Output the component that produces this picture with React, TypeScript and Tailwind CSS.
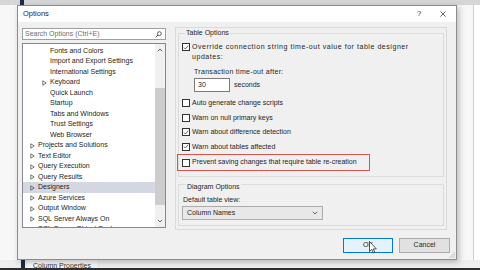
import React from 'react'

const FONT = "font-['Liberation_Sans',Arial,sans-serif]"

type Node = { t: string; l: 1 | 2; arrow?: boolean; sel?: boolean }

const TREE: Node[] = [
    { t: 'Fonts and Colors', l: 2 },
    { t: 'Import and Export Settings', l: 2 },
    { t: 'International Settings', l: 2 },
    { t: 'Keyboard', l: 2, arrow: true },
    { t: 'Quick Launch', l: 2 },
    { t: 'Startup', l: 2 },
    { t: 'Tabs and Windows', l: 2 },
    { t: 'Trust Settings', l: 2 },
    { t: 'Web Browser', l: 2 },
    { t: 'Projects and Solutions', l: 1, arrow: true },
    { t: 'Text Editor', l: 1, arrow: true },
    { t: 'Query Execution', l: 1, arrow: true },
    { t: 'Query Results', l: 1, arrow: true },
    { t: 'Designers', l: 1, arrow: true, sel: true },
    { t: 'Azure Services', l: 1, arrow: true },
    { t: 'Output Window', l: 1, arrow: true },
    { t: 'SQL Server Always On', l: 1, arrow: true },
    { t: 'SQL Server Object Explorer', l: 1, arrow: true },
]

function Triangle() {
    return (
        <svg viewBox="0 0 5 6" className="h-[6px] w-[5px]">
            <path d="M0.8 0.8 L4.2 3 L0.8 5.2 Z" fill="none" stroke="#555" strokeWidth="0.8" />
        </svg>
    )
}

function Check({ on }: { on?: boolean }) {
    return (
        <span className="flex h-[8px] w-[8px] shrink-0 items-center justify-center border border-[#333] bg-white">
            {on && (
                <svg viewBox="0 0 8 8" className="h-[7px] w-[7px]">
                    <path d="M1.2 4.1 L3.1 6 L6.9 1.6" fill="none" stroke="#222" strokeWidth="0.9" />
                </svg>
            )}
        </span>
    )
}

function Chevron({ up }: { up?: boolean }) {
    return (
        <svg viewBox="0 0 6 4" className="h-[4px] w-[6px]">
            <path d={up ? 'M0.8 3.2 L3 1 L5.2 3.2' : 'M0.8 0.8 L3 3 L5.2 0.8'} fill="none" stroke="#555" strokeWidth="0.9" />
        </svg>
    )
}

function Row({ on, children }: { on?: boolean; children: React.ReactNode }) {
    return (
        <div className="flex h-[14.5px] items-center gap-[2px]">
            <Check on={on} />
            <span>{children}</span>
        </div>
    )
}

export default function App() {
    return (
        <div className={`relative h-[270px] w-[480px] overflow-hidden bg-[#f3f3f3] text-[7px] text-[#1e1e1e] ${FONT}`}>
            {/* background app */}
            <div className="flex h-full flex-col">
                <div className="flex h-[5px] bg-[#d6d6d6]">
                    <div className="ml-[20px] w-[4px] bg-[#1f2a44]" />
                </div>
                <div className="flex flex-1 bg-[#f7f7f7]">
                    <div className="ml-[21px] w-[4px] bg-[#1f2a44]" />
                    <div className="ml-auto w-[7px] border-l border-[#cfcfcf] bg-white" />
                </div>
                <div className="flex h-[10px] items-start border-b-2 border-[#2d2d30] bg-[#eeeeee]">
                    <div className="ml-[21px] h-full w-[4px] bg-[#1f2a44]" />
                    <div className="ml-[2px] h-full bg-[#f7f7f7] px-[6px] pt-[2px] leading-[8px] text-[#333]">Column Properties</div>
                </div>
            </div>

            {/* Options dialog */}
            <div className="absolute left-[17px] top-[5px] flex h-[255px] w-[440px] flex-col border border-[#8c8c8c] bg-[#f0f0f0] shadow-[2px_2px_6px_rgba(0,0,0,0.25)]">
                <div className="flex h-[16px] items-center bg-white pl-[5px]">
                    <span className="text-[7.5px]">Options</span>
                    <span className="ml-auto w-[8px] text-center text-[7.5px] text-[#333]">?</span>
                    <svg viewBox="0 0 8 8" className="ml-[17px] mr-[10px] h-[6px] w-[6px]">
                        <path d="M0.5 0.5 L7.5 7.5 M7.5 0.5 L0.5 7.5" stroke="#222" strokeWidth="0.9" />
                    </svg>
                </div>

                <div className="flex items-start gap-[9px] pl-[4px] pr-[9px] pt-[5px]">
                    {/* left column */}
                    <div className="mt-[1px] flex w-[144px] flex-col gap-[3px]">
                        <div className="flex h-[12px] items-center border border-[#a0a0a0] bg-white pl-[2px] pr-[3px]">
                            <span className="text-[#6d6d6d]">Search Options (Ctrl+E)</span>
                            <svg viewBox="0 0 8 8" className="ml-auto h-[7px] w-[7px]">
                                <circle cx="5" cy="3" r="2.2" fill="none" stroke="#333" strokeWidth="0.9" />
                                <path d="M3.4 4.6 L0.8 7.2" stroke="#333" strokeWidth="1" />
                            </svg>
                        </div>
                        <div className="flex h-[185px] border border-[#828790] bg-white">
                            <div className="flex-1 overflow-hidden pt-[1.75px]">
                                {TREE.map((n) => (
                                    <div key={n.t} className={`flex h-[10.5px] items-center ${n.sel ? 'bg-[#d3d7e1]' : ''}`}>
                                        <div className={`flex w-[5px] justify-center ${n.l === 1 ? 'ml-[7px]' : 'ml-[19px]'}`}>
                                            {n.arrow && <Triangle />}
                                        </div>
                                        <span className="ml-[3px] whitespace-nowrap">{n.t}</span>
                                    </div>
                                ))}
                            </div>
                            <div className="flex w-[10px] flex-col bg-[#f0f0f0]">
                                <div className="flex h-[12px] items-center justify-center"><Chevron up /></div>
                                <div className="mt-[32px] h-[117px] bg-[#cdcdcd]" />
                                <div className="flex-1" />
                                <div className="flex h-[12px] items-center justify-center"><Chevron /></div>
                            </div>
                        </div>
                    </div>

                    {/* right panel */}
                    <div className="flex w-[272px] flex-col border border-[#dadada] px-[2px] pb-[3px] pt-[1px]">
                        <fieldset className="border border-[#dcdcdc] pb-[5px] pl-[3px]">
                            <legend className="ml-[3px] px-[1px] leading-[8px]">Table Options</legend>
                            <div className="mt-[5px] flex items-start gap-[2px]">
                                <span className="mt-[1px]"><Check on /></span>
                                <span className="leading-[10px] tracking-[0.55px]">
                                    Override connection string time-out value for table designer<br />updates:
                                </span>
                            </div>
                            <div className="ml-[12px] mt-[5px] leading-[10px] tracking-[0.3px]">Transaction time-out after:</div>
                            <div className="ml-[12px] mt-[1px] flex items-center">
                                <div className="flex h-[14px] w-[36px] items-center border border-[#7a7a7a] bg-white pl-[3px]">30</div>
                                <span className="ml-[4px]">seconds</span>
                            </div>
                            <div className="mt-[4px]">
                                <Row>Auto generate change scripts</Row>
                                <Row>Warn on null primary keys</Row>
                                <Row on>Warn about difference detection</Row>
                                <Row on>Warn about tables affected</Row>
                                <div className="-ml-[5px] flex h-[17px] w-[193px] items-center gap-[2px] border border-[#d9534f] pl-[4px]">
                                    <Check />
                                    <span>Prevent saving changes that require table re-creation</span>
                                </div>
                            </div>
                        </fieldset>
                        <fieldset className="border border-[#dcdcdc] pb-[5px] pl-[4px]">
                            <legend className="ml-[3px] px-[1px] pt-[6px] leading-[8px]">Diagram Options</legend>
                            <div className="mt-[4px] leading-[10px]">Default table view:</div>
                            <div className="-ml-[1px] mt-[1px] flex h-[14px] w-[141px] items-center border border-[#acacac] bg-[#e8e8e8] pl-[4px] pr-[4px]">
                                <span>Column Names</span>
                                <span className="ml-auto"><Chevron /></span>
                            </div>
                        </fieldset>
                    </div>
                </div>

                {/* footer */}
                <div className="mt-[8px] flex justify-end gap-[6px] pr-[6px]">
                    <div className="flex h-[15px] w-[50px] items-center justify-center border border-[#0078d7] bg-[#e5f1fb]">OK</div>
                    <div className="flex h-[15px] w-[51px] items-center justify-center border border-[#adadad] bg-[#e1e1e1]">Cancel</div>
                </div>

                {/* resize grip */}
                <svg viewBox="0 0 6 6" className="absolute bottom-[1px] right-[1px] h-[6px] w-[6px]">
                    <g fill="#a0a0a0">
                        <rect x="4.5" y="0.5" width="1" height="1" />
                        <rect x="2.5" y="2.5" width="1" height="1" />
                        <rect x="4.5" y="2.5" width="1" height="1" />
                        <rect x="0.5" y="4.5" width="1" height="1" />
                        <rect x="2.5" y="4.5" width="1" height="1" />
                        <rect x="4.5" y="4.5" width="1" height="1" />
                    </g>
                </svg>
            </div>

            {/* mouse cursor */}
            <svg viewBox="0 0 8 13" className="absolute left-[369px] top-[241px] h-[13px] w-[8px]">
                <path d="M0.5 0.5 L0.5 10.5 L2.8 8.4 L4.4 12 L5.8 11.4 L4.3 7.9 L7.3 7.9 Z" fill="white" stroke="#111" strokeWidth="0.7" strokeLinejoin="round" />
            </svg>
        </div>
    )
}
